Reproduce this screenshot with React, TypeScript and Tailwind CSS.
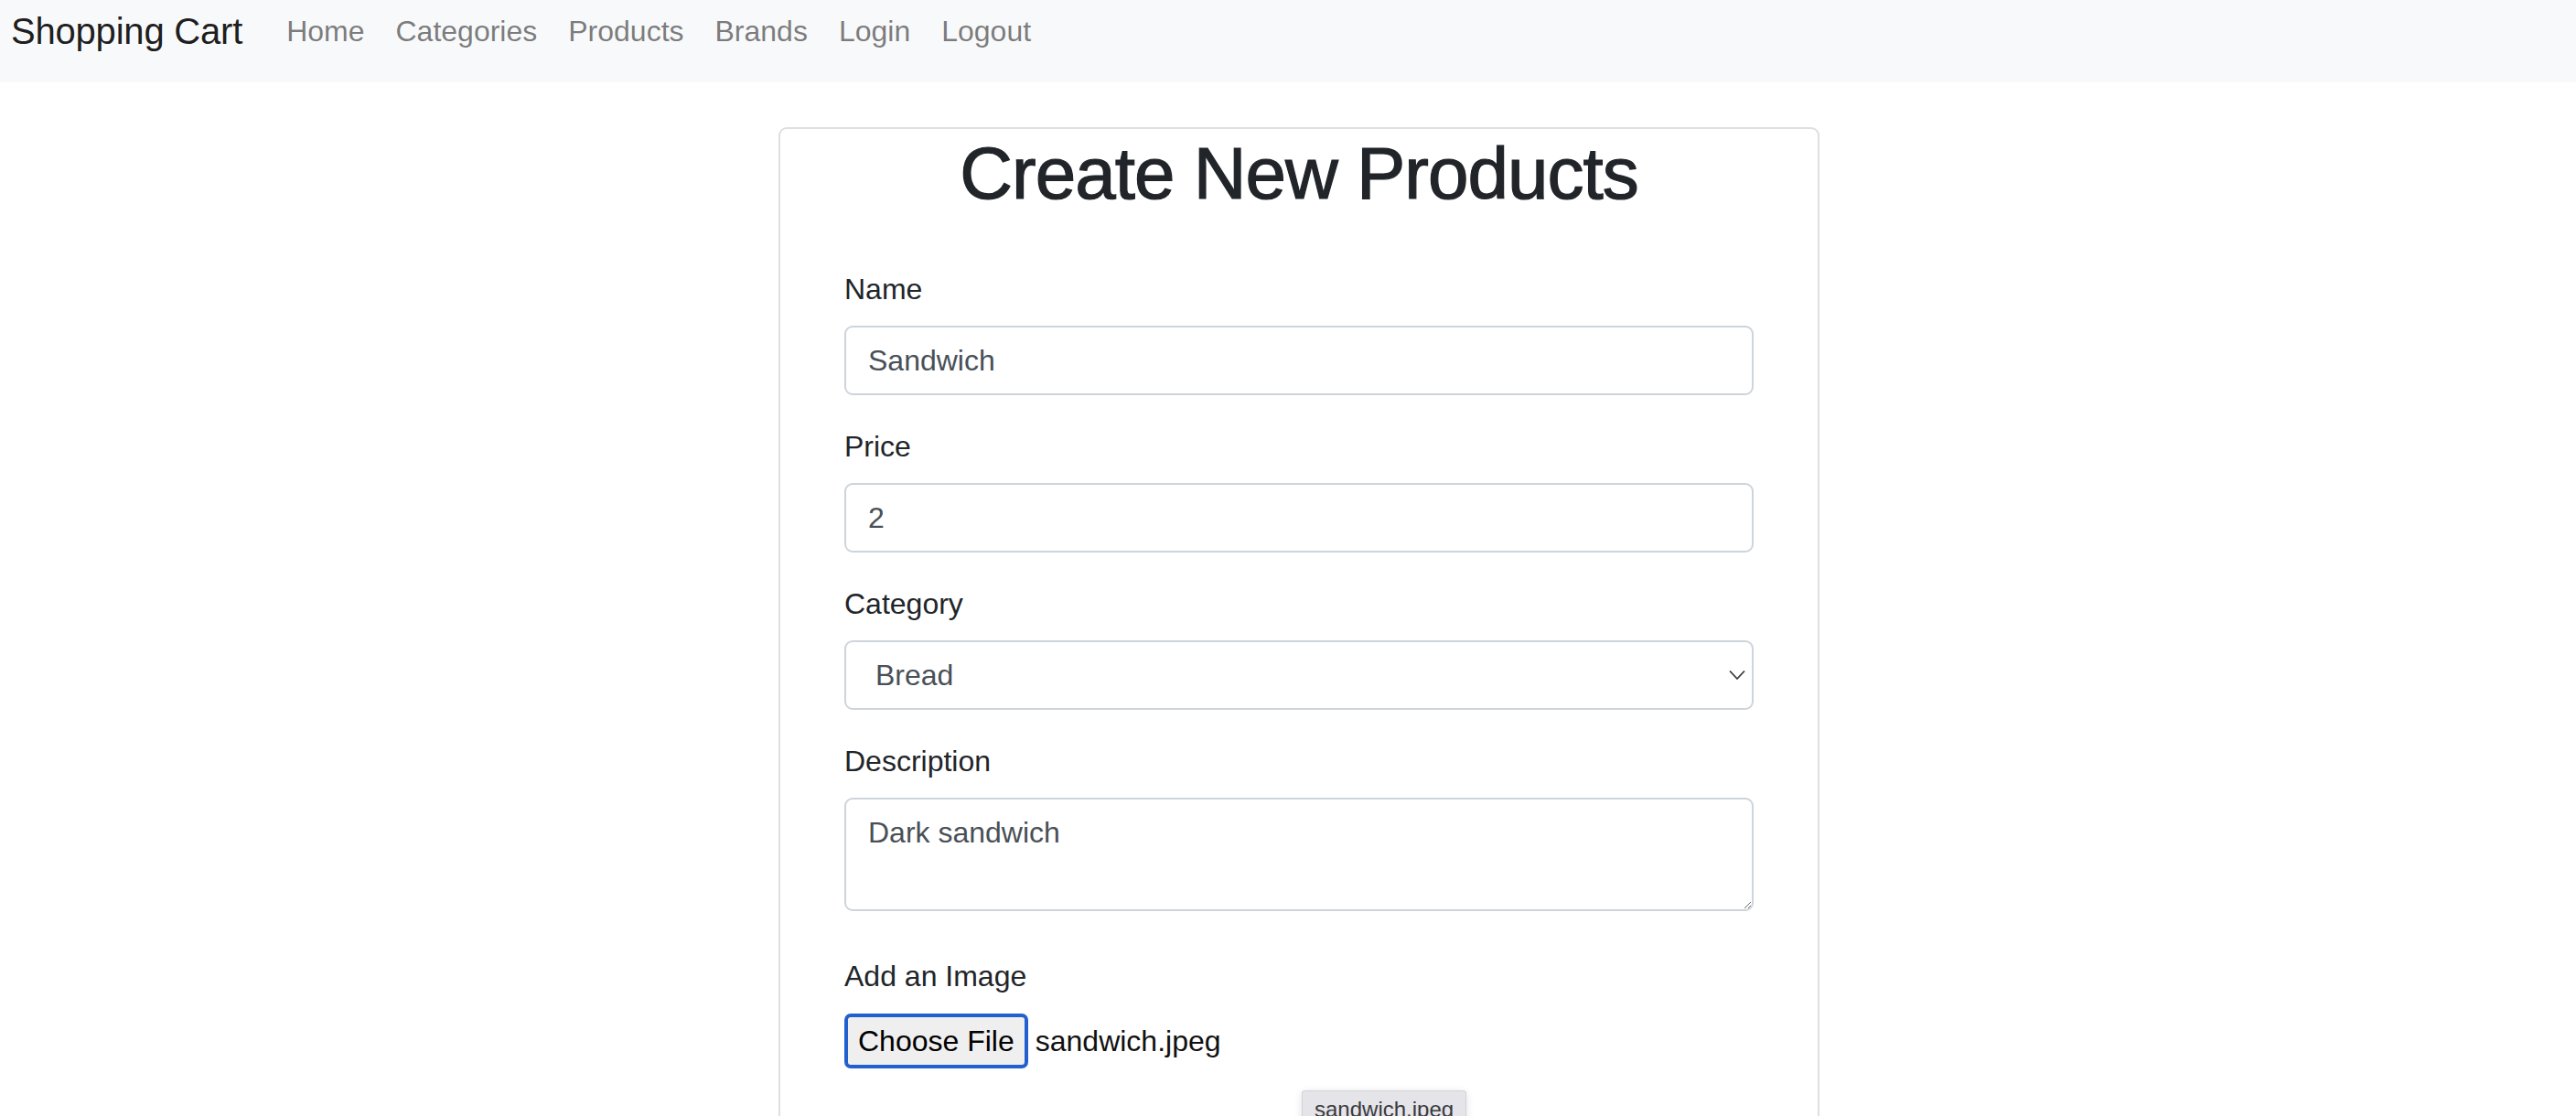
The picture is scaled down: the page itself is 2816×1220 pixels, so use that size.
import React from 'react'

const navLinks = ['Home', 'Categories', 'Products', 'Brands', 'Login', 'Logout']

const Label = ({ children }: { children: React.ReactNode }) => (
    <label className="block text-[32px] leading-[48px] text-[#212529] mb-[16px]">{children}</label>
)

const inputClass =
    "block w-full h-[76px] px-[24px] py-[12px] text-[32px] leading-[48px] text-[#495057] bg-white border-2 border-[#ced4da] rounded-[9px] outline-none font-['Liberation_Sans',Arial,sans-serif]"

export default function App() {
    return (
        <div className="min-h-screen bg-white font-['Liberation_Sans',Arial,sans-serif]">
            {/* Navbar */}
            <nav className="h-[90px] bg-[#f8f9fa] pl-[12px]">
                <div className="h-[68px] flex items-center">
                    <a className="text-[40px] leading-[60px] text-[rgba(0,0,0,0.9)] mr-[31px] tracking-[-0.2px]">Shopping Cart</a>
                    <ul className="flex items-center">
                        {navLinks.map((link) => (
                            <li key={link}>
                                <a className="block px-[17px] text-[32px] leading-[48px] text-[rgba(0,0,0,0.52)]">{link}</a>
                            </li>
                        ))}
                    </ul>
                </div>
            </nav>

            {/* Card */}
            <div className="flex justify-center pl-[24px] pt-[49px]">
                <div className="w-[1138px] border-2 border-[#dfdfdf] rounded-[9px] px-[70px] pb-[200px]">
                    <h1 className="pt-[1px] text-[80px] leading-[96px] font-medium tracking-[-1px] text-[#212529] text-center [-webkit-text-stroke:1.2px_#212529]">
                        Create New Products
                    </h1>

                    <form className="mt-[54px]" onSubmit={(e) => e.preventDefault()}>
                        <div className="mb-[32px]">
                            <Label>Name</Label>
                            <input type="text" readOnly value="Sandwich" className={inputClass} />
                        </div>

                        <div className="mb-[32px]">
                            <Label>Price</Label>
                            <input type="text" readOnly value="2" className={inputClass} />
                        </div>

                        <div className="mb-[32px]">
                            <Label>Category</Label>
                            <div className="relative h-[76px] bg-white border-2 border-[#ced4da] rounded-[9px] flex items-center pl-[32px]">
                                <span className="text-[32px] leading-[48px] text-[#495057]">Bread</span>
                                <svg
                                    className="absolute right-[7px] top-1/2 -translate-y-1/2"
                                    width="18"
                                    height="11"
                                    viewBox="0 0 18 11"
                                    fill="none"
                                    stroke="#3a3a3a"
                                    strokeWidth="1.8"
                                >
                                    <polyline points="1,1 9,9.5 17,1" />
                                </svg>
                            </div>
                        </div>

                        <div className="mb-[47px]">
                            <Label>Description</Label>
                            <textarea
                                rows={2}
                                readOnly
                                value="Dark sandwich"
                                className="block w-full h-[124px] px-[24px] py-[12px] text-[32px] leading-[48px] text-[#495057] bg-white border-2 border-[#ced4da] rounded-[9px] outline-none resize-y font-['Liberation_Sans',Arial,sans-serif]"
                            />
                        </div>

                        <div>
                            <label className="block text-[32px] leading-[48px] text-[#212529] mb-[17px]">Add an Image</label>
                            <div className="relative flex items-center h-[60px]">
                                <button
                                    type="button"
                                    className="h-[60px] px-[11px] bg-[#efefef] border-[4px] border-[#2360cf] rounded-[7px] text-[32px] leading-[40px] text-black"
                                >
                                    Choose File
                                </button>
                                <span className="ml-[8px] text-[32px] leading-[48px] text-[#111]">sandwich.jpeg</span>

                                {/* native tooltip */}
                                <div className="absolute left-[500px] top-[84px] bg-[#e4e4e9] border border-[#d2d2d8] rounded-[3px] shadow-[0_2px_10px_rgba(0,0,0,0.12)] px-[13px] pt-[5px] pb-[6px] text-[24px] leading-[30px] text-[#3a3a3e] whitespace-nowrap">
                                    sandwich.jpeg
                                </div>
                            </div>
                        </div>
                    </form>
                </div>
            </div>
        </div>
    )
}
